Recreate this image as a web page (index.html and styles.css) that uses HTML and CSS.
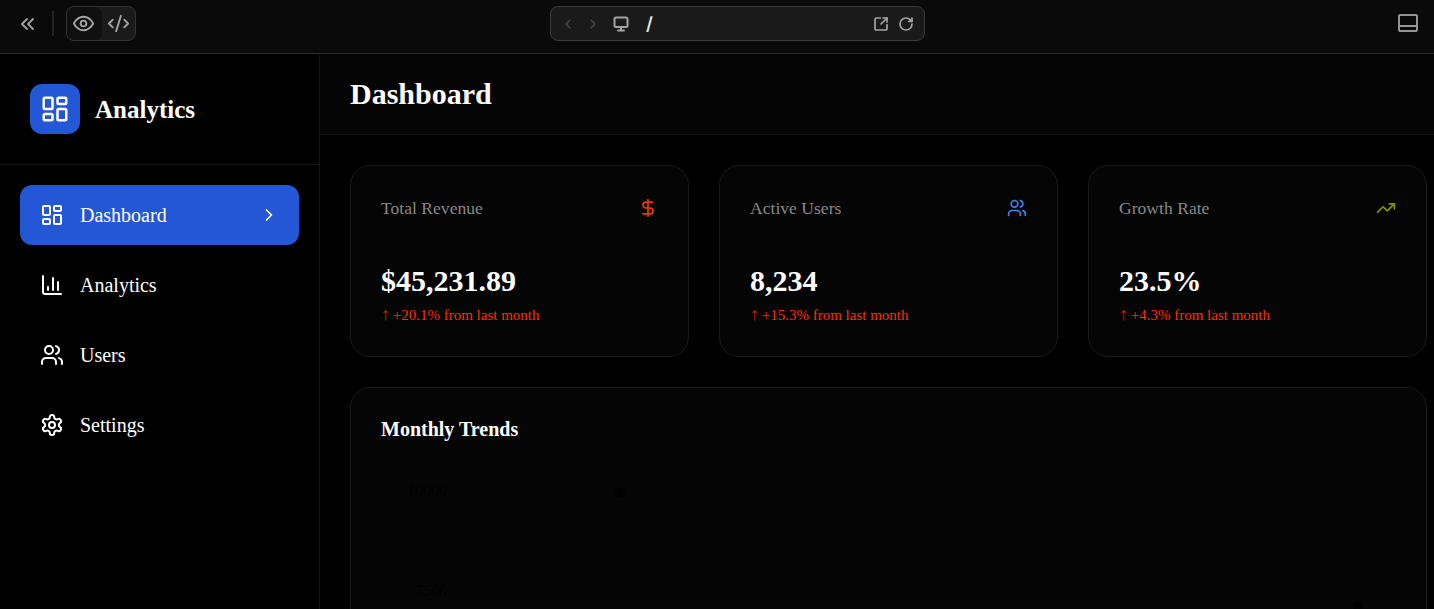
FILE: index.html
```html
<!DOCTYPE html>
<html lang="en">
<head>
  <meta charset="UTF-8" />
  <meta name="viewport" content="width=device-width, initial-scale=1.0" />
  <title>Analytics Dashboard</title>
  <link rel="stylesheet" href="styles.css">
</head>
<body>
  <header class="toolbar">
    <div class="toolbar-left">
      <button class="tool-btn collapse-btn">
        <svg class="icon icon-16 icon-bold" viewBox="0 0 16 16"><path d="M8 3 3 8l5 5"/><path d="M14 3 9 8l5 5"/></svg>
      </button>
      <span class="tool-divider"></span>
      <div class="view-switch">
        <span class="view-tab view-tab-active">
          <svg class="icon icon-23" viewBox="0 0 24 24"><path d="M2 12s3-7 10-7 10 7 10 7-3 7-10 7-10-7-10-7Z"/><circle cx="12" cy="12" r="3"/></svg>
        </span>
        <span class="view-tab">
          <svg class="icon icon-23" viewBox="0 0 24 24"><path d="m18 16 4-4-4-4"/><path d="m6 8-4 4 4 4"/><path d="m14.5 4-5 16"/></svg>
        </span>
      </div>
    </div>
    <div class="address-bar">
      <svg class="icon icon-16 dim" viewBox="0 0 24 24"><path d="m15 18-6-6 6-6"/></svg>
      <svg class="icon icon-16 dim" viewBox="0 0 24 24"><path d="m9 18 6-6-6-6"/></svg>
      <svg class="icon icon-16 monitor" viewBox="0 0 16 16"><rect x="1.500" y="1.500" width="13" height="9.500" rx="1.500"/><path d="M8 11v3.500"/><path d="M5 14.500h6"/></svg>
      <span class="address-path">/</span>
      <svg class="icon icon-16 icon-heavy" viewBox="0 0 24 24"><path d="M21 13v6a2 2 0 0 1-2 2H5a2 2 0 0 1-2-2V5a2 2 0 0 1 2-2h6"/><path d="m21 3-9 9"/><path d="M15 3h6v6"/></svg>
      <svg class="icon icon-16 icon-heavy" viewBox="0 0 24 24"><path d="M21 12a9 9 0 1 1-9-9c2.52 0 4.93 1 6.74 2.74L21 8"/><path d="M21 3v5h-5"/></svg>
    </div>
    <div class="toolbar-right">
      <svg class="icon panel-icon" viewBox="0 0 22 20"><rect x="2" y="2" width="18" height="16" rx="1"/><path d="M2 13h18"/></svg>
    </div>
  </header>

  <div class="app">
    <aside class="sidebar">
      <div class="brand">
        <div class="brand-logo">
          <svg class="icon icon-30" viewBox="0 0 24 24"><rect x="3" y="3" width="7" height="9" rx="1"/><rect x="14" y="3" width="7" height="5" rx="1"/><rect x="14" y="12" width="7" height="9" rx="1"/><rect x="3" y="16" width="7" height="5" rx="1"/></svg>
        </div>
        <span class="brand-name">Analytics</span>
      </div>
      <nav class="nav">
        <a class="nav-item nav-item-active">
          <svg class="icon icon-24" viewBox="0 0 24 24"><rect x="3" y="3" width="7" height="9" rx="1"/><rect x="14" y="3" width="7" height="5" rx="1"/><rect x="14" y="12" width="7" height="9" rx="1"/><rect x="3" y="16" width="7" height="5" rx="1"/></svg>
          <span>Dashboard</span>
          <svg class="icon icon-20 nav-chevron" viewBox="0 0 24 24"><path d="m9 18 6-6-6-6"/></svg>
        </a>
        <a class="nav-item">
          <svg class="icon icon-24" viewBox="0 0 24 24"><path d="M3 3v16a2 2 0 0 0 2 2h16"/><path d="M18 17V9"/><path d="M13 17V5"/><path d="M8 17v-3"/></svg>
          <span>Analytics</span>
        </a>
        <a class="nav-item">
          <svg class="icon icon-24" viewBox="0 0 24 24"><path d="M16 21v-2a4 4 0 0 0-4-4H6a4 4 0 0 0-4 4v2"/><circle cx="9" cy="7" r="4"/><path d="M22 21v-2a4 4 0 0 0-3-3.87"/><path d="M16 3.13a4 4 0 0 1 0 7.75"/></svg>
          <span>Users</span>
        </a>
        <a class="nav-item">
          <svg class="icon icon-24" viewBox="0 0 24 24"><path d="M12.22 2h-.44a2 2 0 0 0-2 2v.18a2 2 0 0 1-1 1.73l-.43.25a2 2 0 0 1-2 0l-.15-.08a2 2 0 0 0-2.73.73l-.22.38a2 2 0 0 0 .73 2.73l.15.1a2 2 0 0 1 1 1.72v.51a2 2 0 0 1-1 1.74l-.15.09a2 2 0 0 0-.73 2.73l.22.38a2 2 0 0 0 2.73.73l.15-.08a2 2 0 0 1 2 0l.43.25a2 2 0 0 1 1 1.73V20a2 2 0 0 0 2 2h.44a2 2 0 0 0 2-2v-.18a2 2 0 0 1 1-1.73l.43-.25a2 2 0 0 1 2 0l.15.08a2 2 0 0 0 2.73-.73l.22-.39a2 2 0 0 0-.73-2.73l-.15-.08a2 2 0 0 1-1-1.74v-.5a2 2 0 0 1 1-1.74l.15-.09a2 2 0 0 0 .73-2.73l-.22-.38a2 2 0 0 0-2.73-.73l-.15.08a2 2 0 0 1-2 0l-.43-.25a2 2 0 0 1-1-1.73V4a2 2 0 0 0-2-2z"/><circle cx="12" cy="12" r="3"/></svg>
          <span>Settings</span>
        </a>
      </nav>
    </aside>

    <main class="main">
      <div class="page-header">
        <h1 class="page-title">Dashboard</h1>
      </div>
      <div class="content">
        <section class="stats">
          <div class="card stat-card">
            <div class="stat-head">
              <span class="stat-label">Total Revenue</span>
              <svg class="icon icon-20 red" viewBox="0 0 24 24"><path d="M12 2v20"/><path d="M17 5H9.5a3.5 3.5 0 0 0 0 7h5a3.5 3.5 0 0 1 0 7H6"/></svg>
            </div>
            <div class="stat-value">$45,231.89</div>
            <div class="stat-change"><span class="stat-arrow">↑</span> +20.1% from last month</div>
          </div>
          <div class="card stat-card">
            <div class="stat-head">
              <span class="stat-label">Active Users</span>
              <svg class="icon icon-20 blue" viewBox="0 0 24 24"><path d="M16 21v-2a4 4 0 0 0-4-4H6a4 4 0 0 0-4 4v2"/><circle cx="9" cy="7" r="4"/><path d="M22 21v-2a4 4 0 0 0-3-3.87"/><path d="M16 3.13a4 4 0 0 1 0 7.75"/></svg>
            </div>
            <div class="stat-value">8,234</div>
            <div class="stat-change"><span class="stat-arrow">↑</span> +15.3% from last month</div>
          </div>
          <div class="card stat-card">
            <div class="stat-head">
              <span class="stat-label">Growth Rate</span>
              <svg class="icon icon-20 green" viewBox="0 0 24 24"><path d="m22 7-8.5 8.5-5-5L2 17"/><path d="M16 7h6v6"/></svg>
            </div>
            <div class="stat-value">23.5%</div>
            <div class="stat-change"><span class="stat-arrow">↑</span> +4.3% from last month</div>
          </div>
        </section>

        <section class="card chart-card">
          <h2 class="chart-title">Monthly Trends</h2>
          <svg class="chart" width="1015" height="400">
            <text class="chart-label" x="66" y="37" text-anchor="end">10000</text>
            <text class="chart-label" x="66" y="137" text-anchor="end">7500</text>
            <circle class="chart-dot" cx="239" cy="34" r="5"/>
            <circle class="chart-dot" cx="977" cy="147" r="5"/>
          </svg>
        </section>
      </div>
    </main>
  </div>
</body>
</html>
```

FILE: styles.css
```css
* {
  box-sizing: border-box;
}
html, body {
  height: 100%;
}
body {
  margin: 0;
  display: flex;
  flex-direction: column;
  overflow: hidden;
  background: #000;
  color: #fff;
  font-family: "Liberation Serif", "Times New Roman", serif;
}
.icon {
  display: block;
  flex: none;
  fill: none;
  stroke: currentColor;
  stroke-width: 2;
  stroke-linecap: round;
  stroke-linejoin: round;
}
.icon-16 { width: 16px; height: 16px; }
.icon-20 { width: 20px; height: 20px; }
.icon-23 { width: 23px; height: 23px; }
.icon-24 { width: 24px; height: 24px; }
.icon-30 { width: 30px; height: 30px; }
.icon-bold { stroke-width: 1.8; }
.icon-heavy { stroke-width: 2.6; }

/* top toolbar */
.toolbar {
  flex: none;
  height: 54px;
  display: grid;
  grid-template-columns: 550px 375px 1fr;
  align-items: start;
  padding-top: 6px;
  background: #0a0a0a;
  border-bottom: 1px solid #2b2b2b;
  color: #a3a3a3;
  font-family: Inter, "Noto Sans", sans-serif;
}
.toolbar-left {
  display: flex;
  align-items: center;
  padding-left: 19px;
}
.tool-btn {
  display: flex;
  padding: 0;
  background: none;
  border: none;
  color: #a3a3a3;
}
.tool-divider {
  width: 2px;
  height: 25px;
  margin: 0 12px 0 17px;
  background: #242424;
}
.view-switch {
  display: flex;
  width: 70px;
  height: 35px;
  border: 1px solid #333;
  border-radius: 8px;
  background: #1a1a1a;
  overflow: hidden;
}
.view-tab {
  flex: 1;
  display: flex;
  align-items: center;
  justify-content: center;
}
.view-tab-active {
  padding-right: 1px;
  background: #0f0f0f;
  border-radius: 7px;
}
.address-bar {
  height: 35px;
  display: flex;
  align-items: center;
  padding: 0 10px 0 9px;
  gap: 9px;
  background: #1a1a1a;
  border: 1px solid #3a3a3a;
  border-radius: 8px;
}
.dim {
  color: #4a4a4a;
}
.monitor {
  margin-left: 3px;
}
.address-path {
  flex: 1;
  margin-left: 8px;
  color: #e5e5e5;
  font-size: 18px;
  font-weight: 600;
}
.toolbar-right {
  display: flex;
  justify-content: flex-end;
  padding: 7px 15px 0 0;
}
.panel-icon {
  width: 22px;
  height: 20px;
  color: #949494;
  stroke-linecap: square;
}

/* app frame */
.app {
  flex: 1;
  min-height: 0;
  display: flex;
}
.sidebar {
  flex: none;
  width: 320px;
  background: #000;
  border-right: 1px solid #141414;
}
.brand {
  display: flex;
  align-items: center;
  gap: 15px;
  padding: 30px;
  border-bottom: 1px solid #161616;
}
.brand-logo {
  width: 50px;
  height: 50px;
  display: flex;
  align-items: center;
  justify-content: center;
  background: #2457d6;
  border-radius: 12px;
}
.brand-name {
  padding-top: 2px;
  font-size: 25px;
  font-weight: bold;
}
.nav {
  display: flex;
  flex-direction: column;
  gap: 10px;
  padding: 20px;
}
.nav-item {
  height: 60px;
  display: flex;
  align-items: center;
  gap: 16px;
  padding: 0 20px;
  border-radius: 12px;
  font-size: 20px;
}
.nav-item-active {
  background: #2457d6;
}
.nav-chevron {
  margin-left: auto;
}

/* main column */
.main {
  flex: 1;
  min-width: 0;
  background: #000;
}
.page-header {
  height: 81px;
  display: flex;
  align-items: center;
  padding: 0 30px;
  background: #050505;
  border-bottom: 1px solid #161616;
}
.page-title {
  margin: 0;
  font-size: 30px;
  font-weight: bold;
}
.content {
  display: flex;
  flex-direction: column;
  gap: 30px;
  padding: 30px 7px 30px 30px;
}
.stats {
  display: grid;
  grid-template-columns: repeat(3, 1fr);
  gap: 30px;
}
.card {
  background: #050505;
  border: 1px solid #1a1a1a;
  border-radius: 20px;
}
.stat-card {
  height: 192px;
  padding: 30px;
}
.stat-head {
  height: 24px;
  display: flex;
  align-items: center;
  justify-content: space-between;
  margin-bottom: 44px;
}
.stat-label {
  font-size: 17.6px;
  color: #888;
}
.red { color: #ff3300; }
.blue { color: #3b82f6; }
.green { color: #7c9a00; }
.stat-value {
  font-size: 30px;
  font-weight: bold;
  margin-bottom: 7px;
}
.stat-change {
  font-size: 15px;
  line-height: 17px;
  color: #ff2d00;
}
.stat-arrow {
  display: inline-block;
  width: 8px;
  font-family: "Liberation Sans", sans-serif;
  font-size: 18px;
  line-height: 1;
  color: #d92600;
}
.chart-card {
  flex: none;
  height: 470px;
  padding: 30px;
}
.chart-title {
  margin: 0 0 18px;
  font-size: 20px;
  font-weight: bold;
}
.chart {
  display: block;
}
.chart-label {
  font-size: 16px;
  fill: #000;
}
.chart-dot {
  fill: #000;
}
```
